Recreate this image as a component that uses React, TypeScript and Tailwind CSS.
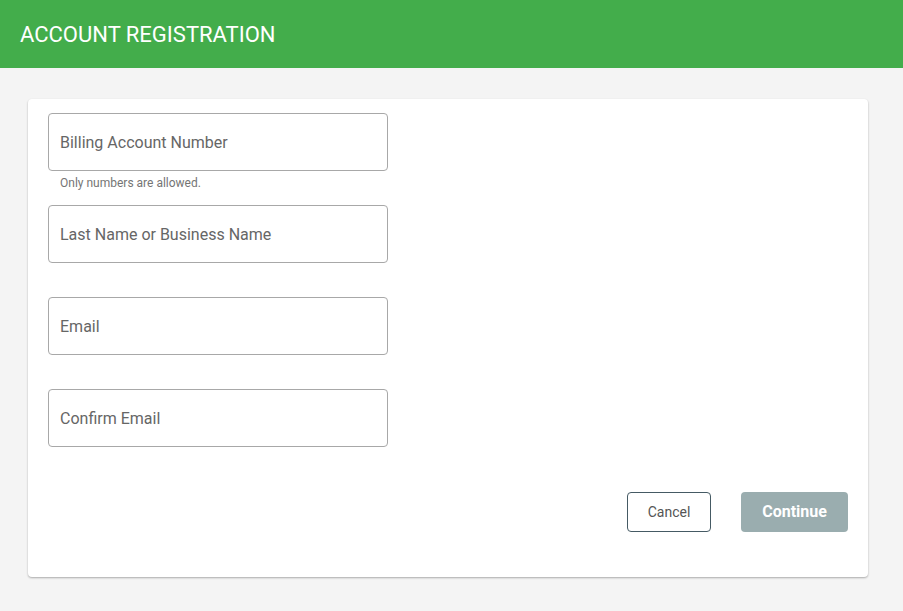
const fields = [
  { label: 'Billing Account Number', hint: 'Only numbers are allowed.' },
  { label: 'Last Name or Business Name' },
  { label: 'Email' },
  { label: 'Confirm Email' },
];

export default function App() {
  return (
    <div className="min-h-[611px] bg-[#f4f4f4] font-['Roboto',sans-serif]">
      <header className="flex h-[68px] items-center bg-[#43ad4b] px-5">
        <h1 className="text-[22px] text-white">ACCOUNT REGISTRATION</h1>
      </header>

      <main className="pl-7 pr-[35px] pt-[31px]">
        <div className="rounded bg-white px-5 pb-[45px] pt-[14px] shadow-[0_1px_2px_rgba(0,0,0,0.3)]">
          {fields.map((f) => (
            <div key={f.label} className="h-[92px]">
              <input
                placeholder={f.label}
                className="h-[58px] w-[340px] rounded border border-[#a8a8a8] px-[11px] text-base text-[#555] placeholder:text-[#666] outline-none"
              />
              {f.hint && <p className="mt-[3px] pl-3 text-[12px] text-[#757575]">{f.hint}</p>}
            </div>
          ))}

          <div className="mt-[11px] flex justify-end gap-[30px]">
            <button className="h-10 w-[84px] rounded border border-[#455a64] text-sm text-[#555]">
              Cancel
            </button>
            <button disabled className="h-10 w-[107px] rounded bg-[#9aadaf] text-base font-bold text-white">
              Continue
            </button>
          </div>
        </div>
      </main>
    </div>
  );
}
